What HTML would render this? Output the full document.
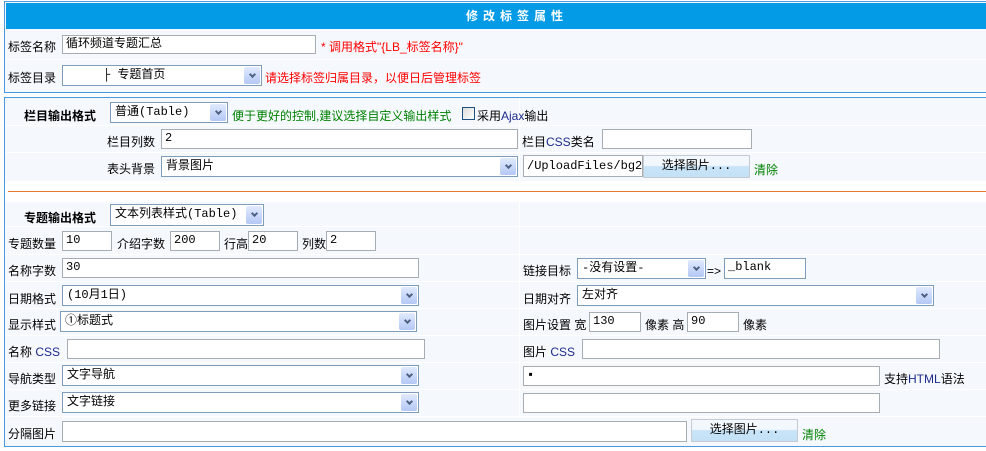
<!DOCTYPE html>
<html><head><meta charset="utf-8">
<style>
*{box-sizing:border-box;margin:0;padding:0}
body{width:986px;height:451px;background:#fff;position:relative;overflow:hidden;font:12px "Liberation Sans","Noto Sans CJK SC",sans-serif;color:#000}
.a{position:absolute;white-space:nowrap;line-height:14px}
.p{position:absolute;background:#f5f9fe;border:1px solid #4a9ae2;border-right:none}
.hl{position:absolute;height:2px;background:#fff}
.in{position:absolute;background:#fff;border:1px solid #a5acb2;padding:1px 0 0 3px;font:12px "Liberation Mono","Noto Sans CJK SC",monospace;line-height:15px;white-space:nowrap;overflow:hidden}
.sel{position:absolute;background:#fff;border:1px solid #7f9db9;padding:2px 0 0 4px;font:12px "Liberation Mono","Noto Sans CJK SC",monospace;line-height:15px;white-space:nowrap;overflow:hidden}
.sel:after{content:"";position:absolute;right:1px;top:1px;bottom:1px;width:16px;background:linear-gradient(#e1eafe,#b4c8f5);border-radius:2px}
.sel i{position:absolute;right:6px;top:50%;margin-top:-4px;width:5px;height:5px;border-right:2px solid #4d6185;border-bottom:2px solid #4d6185;transform:rotate(45deg);z-index:2}
.btn{position:absolute;border:1px solid #c5cbd0;background:linear-gradient(#f2f8fd 0,#f2f8fd 45%,#c8e4f8 50%,#c3e1f6 100%);text-align:center;font:12px "Liberation Mono","Noto Sans CJK SC",monospace;line-height:20px}
.red{color:#f00}.grn{color:#008000}
b{font-weight:bold}
.c{color:#1e2a8a}
</style></head><body>
<div class="p" style="left:4px;top:1px;width:990px;height:92px"></div>
<div style="position:absolute;left:6px;top:3px;width:980px;height:26px;background:#039be5"></div>
<div class="a" style="left:466px;top:9px;color:#fff;font-weight:bold;letter-spacing:5px">修改标签属性</div>
<div class="hl" style="left:6px;top:59px;width:980px;height:1px"></div>
<div class="a" style="left:8px;top:40px">标签名称</div>
<div class="in" style="left:62px;top:35px;width:254px;height:19px">循环频道专题汇总</div>
<div class="a red" style="left:321px;top:40px">* 调用格式"{LB_标签名称}"</div>
<div class="a" style="left:8px;top:71px">标签目录</div>
<div class="sel" style="left:62px;top:65px;width:200px;height:21px">&nbsp;&nbsp;&nbsp;&nbsp;&nbsp;├ 专题首页<i></i></div>
<div class="a red" style="left:265px;top:71px">请选择标签归属目录，以便日后管理标签</div>

<div class="p" style="left:4px;top:97px;width:990px;height:350px"></div>
<div class="hl" style="left:6px;top:125px;width:980px;height:1px"></div>
<div class="hl" style="left:6px;top:152px;width:980px;height:1px"></div>
<div style="position:absolute;left:5px;top:181px;width:981px;height:21px;background:#fff"></div>
<div style="position:absolute;left:8px;top:191px;width:978px;height:1px;background:#e87830"></div>
<div class="hl" style="left:6px;top:226px;width:980px;height:1px"></div>
<div class="hl" style="left:6px;top:254px;width:980px;height:1px"></div>
<div class="hl" style="left:6px;top:281px;width:980px;height:1px"></div>
<div class="hl" style="left:6px;top:308px;width:980px;height:1px"></div>
<div class="hl" style="left:6px;top:335px;width:980px;height:1px"></div>
<div class="hl" style="left:6px;top:362px;width:980px;height:1px"></div>
<div class="hl" style="left:6px;top:389px;width:980px;height:1px"></div>
<div class="hl" style="left:6px;top:416px;width:980px;height:1px"></div>
<div style="position:absolute;left:519px;top:98px;width:1px;height:83px;background:#fff"></div>
<div style="position:absolute;left:519px;top:202px;width:1px;height:215px;background:#fff"></div>

<div class="a" style="left:24px;top:109px"><b>栏目输出格式</b></div>
<div class="sel" style="left:110px;top:102px;width:118px;height:21px">普通(Table)<i></i></div>
<div class="a grn" style="left:232px;top:109px">便于更好的控制,建议选择自定义输出样式</div>
<div style="position:absolute;left:462px;top:107px;width:13px;height:13px;border:1px solid #1c5180;background:linear-gradient(135deg,#dcdcd7,#fff)"></div>
<div class="a" style="left:477px;top:109px">采用<span class="c">Ajax</span>输出</div>

<div class="a" style="left:107px;top:135px">栏目列数</div>
<div class="in" style="left:161px;top:129px;width:357px;height:20px">2</div>
<div class="a" style="left:522px;top:135px">栏目<span class="c">CSS</span>类名</div>
<div class="in" style="left:602px;top:129px;width:150px;height:20px"></div>

<div class="a" style="left:107px;top:162px">表头背景</div>
<div class="sel" style="left:161px;top:156px;width:357px;height:21px">背景图片<i></i></div>
<div class="in" style="left:523px;top:155px;width:120px;height:22px;padding-top:3px">/UploadFiles/bg2.</div>
<div class="btn" style="left:643px;top:155px;width:107px;height:23px">选择图片...</div>
<div class="a grn" style="left:754px;top:163px">清除</div>

<div class="a" style="left:24px;top:211px"><b>专题输出格式</b></div>
<div class="sel" style="left:110px;top:204px;width:154px;height:22px">文本列表样式(Table)<i></i></div>

<div class="a" style="left:8px;top:237px">专题数量</div>
<div class="in" style="left:62px;top:231px;width:50px;height:20px">10</div>
<div class="a" style="left:117px;top:237px">介绍字数</div>
<div class="in" style="left:170px;top:231px;width:50px;height:20px">200</div>
<div class="a" style="left:224px;top:237px">行高</div>
<div class="in" style="left:248px;top:231px;width:50px;height:20px">20</div>
<div class="a" style="left:302px;top:237px">列数</div>
<div class="in" style="left:326px;top:231px;width:50px;height:20px">2</div>

<div class="a" style="left:8px;top:264px">名称字数</div>
<div class="in" style="left:62px;top:258px;width:357px;height:20px">30</div>
<div class="a" style="left:523px;top:264px">链接目标</div>
<div class="sel" style="left:577px;top:258px;width:129px;height:21px">-没有设置-<i></i></div>
<div class="a" style="left:707px;top:264px">=&gt;</div>
<div class="in" style="left:724px;top:258px;width:82px;height:21px;border-color:#7f9db9">_blank</div>

<div class="a" style="left:8px;top:292px">日期格式</div>
<div class="sel" style="left:62px;top:285px;width:357px;height:21px">(10月1日)<i></i></div>
<div class="a" style="left:523px;top:292px">日期对齐</div>
<div class="sel" style="left:577px;top:285px;width:357px;height:21px">左对齐<i></i></div>

<div class="a" style="left:8px;top:318px">显示样式</div>
<div class="sel" style="left:60px;top:311px;width:357px;height:21px">①标题式<i></i></div>
<div class="a" style="left:523px;top:318px">图片设置 宽</div>
<div class="in" style="left:589px;top:312px;width:52px;height:20px">130</div>
<div class="a" style="left:645px;top:318px">像素 高</div>
<div class="in" style="left:687px;top:312px;width:52px;height:20px">90</div>
<div class="a" style="left:743px;top:318px">像素</div>

<div class="a" style="left:8px;top:345px">名称 <span class="c">CSS</span></div>
<div class="in" style="left:67px;top:339px;width:358px;height:20px"></div>
<div class="a" style="left:523px;top:345px">图片 <span class="c">CSS</span></div>
<div class="in" style="left:582px;top:339px;width:358px;height:20px"></div>

<div class="a" style="left:8px;top:372px">导航类型</div>
<div class="sel" style="left:62px;top:365px;width:357px;height:21px">文字导航<i></i></div>
<div class="in" style="left:523px;top:366px;width:357px;height:20px">▪</div>
<div class="a" style="left:884px;top:372px">支持<span class="c">HTML</span>语法</div>

<div class="a" style="left:8px;top:399px">更多链接</div>
<div class="sel" style="left:62px;top:392px;width:357px;height:21px">文字链接<i></i></div>
<div class="in" style="left:523px;top:393px;width:357px;height:20px"></div>

<div class="a" style="left:8px;top:427px">分隔图片</div>
<div class="in" style="left:62px;top:421px;width:625px;height:21px"></div>
<div class="btn" style="left:691px;top:419px;width:107px;height:23px">选择图片...</div>
<div class="a grn" style="left:802px;top:428px">清除</div>
</body></html>
